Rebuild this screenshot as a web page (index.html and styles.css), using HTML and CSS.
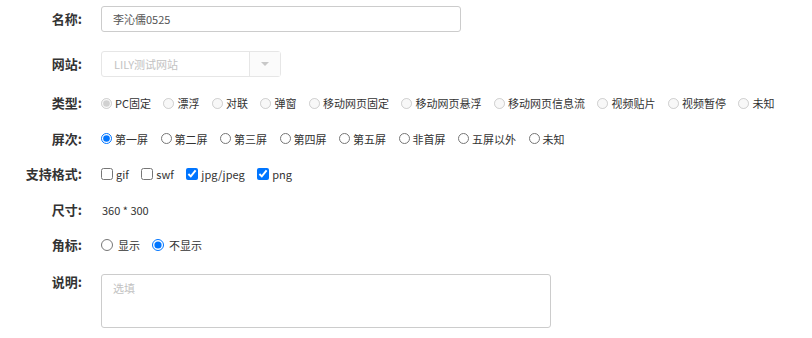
FILE: index.html
```html
<!DOCTYPE html>
<html lang="zh-CN">
  <head>
    <meta charset="UTF-8" />
    <meta name="viewport" content="width=device-width, initial-scale=1.0" />
    <title>广告位设置</title>
    <link rel="stylesheet" href="styles.css">
  </head>
  <body>
    <form class="ad-form">
      <div class="row row-tall">
        <label class="row-label" for="name">名称:</label>
        <input class="text-input" type="text" id="name" value="李沁儒0525" />
      </div>

      <div class="row row-tall row-site">
        <span class="row-label">网站:</span>
        <div class="select is-disabled">
          <span class="select-value">LILY测试网站</span>
          <span class="select-btn"><span class="select-arrow"></span></span>
        </div>
      </div>

      <div class="row row-type">
        <span class="row-label">类型:</span>
        <div class="options">
          <label class="option"><input type="radio" name="type" checked disabled />PC固定</label>
          <label class="option"><input type="radio" name="type" disabled />漂浮</label>
          <label class="option"><input type="radio" name="type" disabled />对联</label>
          <label class="option"><input type="radio" name="type" disabled />弹窗</label>
          <label class="option"><input type="radio" name="type" disabled />移动网页固定</label>
          <label class="option"><input type="radio" name="type" disabled />移动网页悬浮</label>
          <label class="option"><input type="radio" name="type" disabled />移动网页信息流</label>
          <label class="option"><input type="radio" name="type" disabled />视频贴片</label>
          <label class="option"><input type="radio" name="type" disabled />视频暂停</label>
          <label class="option"><input type="radio" name="type" disabled />未知</label>
        </div>
      </div>

      <div class="row">
        <span class="row-label">屏次:</span>
        <div class="options">
          <label class="option"><input type="radio" name="screen" checked />第一屏</label>
          <label class="option"><input type="radio" name="screen" />第二屏</label>
          <label class="option"><input type="radio" name="screen" />第三屏</label>
          <label class="option"><input type="radio" name="screen" />第四屏</label>
          <label class="option"><input type="radio" name="screen" />第五屏</label>
          <label class="option"><input type="radio" name="screen" />非首屏</label>
          <label class="option"><input type="radio" name="screen" />五屏以外</label>
          <label class="option"><input type="radio" name="screen" />未知</label>
        </div>
      </div>

      <div class="row">
        <span class="row-label">支持格式:</span>
        <div class="options">
          <label class="option"><input type="checkbox" />gif</label>
          <label class="option"><input type="checkbox" />swf</label>
          <label class="option"><input type="checkbox" checked />jpg/jpeg</label>
          <label class="option"><input type="checkbox" checked />png</label>
        </div>
      </div>

      <div class="row">
        <span class="row-label">尺寸:</span>
        <span class="plain-value">360 * 300</span>
      </div>

      <div class="row">
        <span class="row-label">角标:</span>
        <div class="options options-wide">
          <label class="option"><input type="radio" name="badge" />显示</label>
          <label class="option"><input type="radio" name="badge" checked />不显示</label>
        </div>
      </div>

      <div class="row row-area">
        <label class="row-label" for="desc">说明:</label>
        <textarea class="text-area" id="desc" placeholder="选填"></textarea>
      </div>
    </form>
  </body>
</html>
```

FILE: styles.css
```css
body {
  margin: 0;
  font-family: "Noto Sans CJK SC", "Liberation Sans", sans-serif;
  color: #333;
  background: #fff;
}

.ad-form {
  padding-top: 6px;
}

.row {
  display: flex;
  align-items: center;
  height: 20px;
  margin-bottom: 15.5px;
}

.row-tall {
  height: 26px;
  margin-bottom: 19px;
}

.row-site {
  margin-bottom: 16px;
}

.row-label {
  flex: 0 0 82px;
  margin-right: 19px;
  text-align: right;
  font-size: 13px;
  font-weight: bold;
  line-height: 16px;
  color: #333;
}

.text-input {
  box-sizing: border-box;
  width: 360px;
  height: 26px;
  padding: 0 11px;
  border: 1px solid #ccc;
  border-radius: 3px;
  font-family: inherit;
  font-size: 11px;
  color: #555;
  outline: none;
}

.select {
  box-sizing: border-box;
  display: flex;
  width: 180px;
  height: 26px;
  border: 1px solid #e6e6e6;
  border-radius: 3px;
  background: #fff;
}

.select-value {
  flex: 1;
  padding-left: 12px;
  font-size: 11px;
  line-height: 24px;
  color: #c2c2c2;
}

.select-btn {
  display: flex;
  align-items: center;
  justify-content: center;
  width: 30px;
  border-left: 1px solid #e6e6e6;
  background: #fbfbfb;
}

.select-arrow {
  width: 0;
  height: 0;
  border-left: 4px solid transparent;
  border-right: 4px solid transparent;
  border-top: 4px solid #c8c8c8;
}

.options {
  display: flex;
  align-items: center;
}

.option {
  display: inline-flex;
  align-items: center;
  margin-right: 12.5px;
  font-size: 11px;
  line-height: 16px;
  color: #333;
  white-space: nowrap;
}

.option input {
  width: 11px;
  height: 11px;
  margin: 0 3px 0 0;
}

.option input[type="checkbox"] {
  width: 12px;
  height: 12px;
}

.options-wide .option {
  margin-right: 12px;
}

.options-wide .option input {
  width: 12px;
  height: 12px;
  margin-right: 5px;
}

.plain-value {
  padding-left: 1px;
  font-size: 11px;
  color: #333;
}

.row-area {
  align-items: flex-start;
  height: auto;
  margin-top: 19px;
}

.text-area {
  box-sizing: border-box;
  width: 450px;
  height: 54px;
  padding: 5px 11px;
  border: 1px solid #ccc;
  border-radius: 3px;
  font-family: inherit;
  font-size: 11px;
  resize: none;
  outline: none;
}

.text-area::placeholder {
  color: #c2c2c2;
}
```
